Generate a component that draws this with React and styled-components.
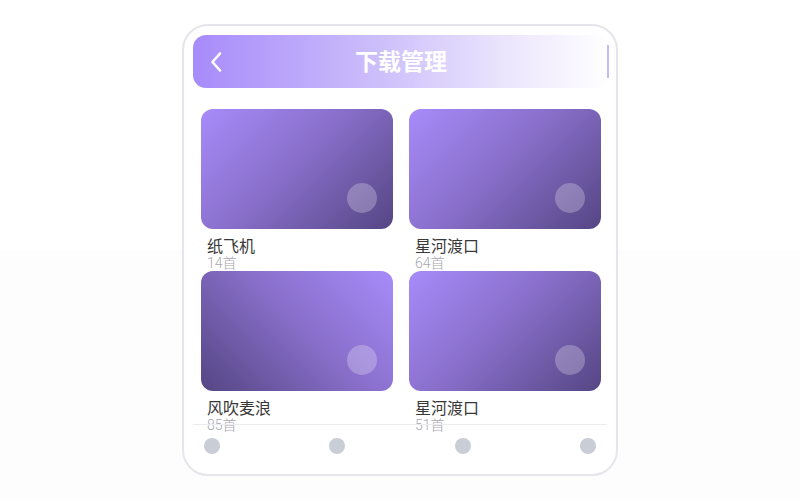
import React from "react";
import styled, { createGlobalStyle } from "styled-components";

const Global = createGlobalStyle`
  html, body { margin: 0; padding: 0; }
  body {
    background: linear-gradient(#ffffff 0 250px, #fdfdfd 250px);
    min-height: 500px;
    font-family: Roboto, "Noto Sans CJK SC", sans-serif;
  }
`;

const Page = styled.div`
  display: flex;
  justify-content: center;
  padding-top: 24px;
`;

const Phone = styled.div`
  box-sizing: border-box;
  width: 436px;
  height: 452px;
  border: 2px solid #e5e5eb;
  border-radius: 26px;
  background: #fff;
  display: flex;
  flex-direction: column;
`;

const Header = styled.div`
  position: relative;
  margin: 9px 7px 0 9px;
  height: 53px;
  border-radius: 13px;
  background: linear-gradient(90deg, #a78bfa 0%, #cdbffb 45%, #ebe5fd 75%, #ffffff 100%);
  display: flex;
  align-items: center;
  justify-content: center;

  &::after {
    content: "";
    position: absolute;
    right: 0;
    top: 10px;
    bottom: 10px;
    width: 2px;
    background: rgba(185, 165, 250, 0.8);
  }
`;

const Back = styled.button`
  position: absolute;
  left: 16px;
  top: 50%;
  transform: translateY(-50%);
  background: none;
  border: 0;
  padding: 0;
  display: flex;
  cursor: pointer;
`;

const Title = styled.h1`
  margin: 0 0 4px;
  color: #fff;
  font-family: "Noto Sans CJK SC", sans-serif;
  font-size: 23px;
  line-height: 30px;
  font-weight: 700;
`;

const Grid = styled.div`
  margin-top: 21px;
  padding: 0 16px 0 17px;
  height: 315px;
  display: grid;
  grid-template-columns: 192px 192px;
  column-gap: 16px;
  row-gap: 1px;
  align-content: start;
`;

const Item = styled.div`
  display: flex;
  flex-direction: column;
`;

const Cover = styled.div`
  position: relative;
  height: 120px;
  border-radius: 12px;
  background: linear-gradient(${(p) => p.$angle}deg, #a78bfa 0%, #8a70cc 45%, #554684 100%);
`;

const Dot = styled.span`
  position: absolute;
  right: 16px;
  bottom: 16px;
  width: 30px;
  height: 30px;
  border-radius: 50%;
  background: rgba(255, 255, 255, 0.25);
`;

const Name = styled.div`
  margin: 9px 0 0 6px;
  font-size: 16px;
  line-height: 18px;
  color: #383838;
`;

const Count = styled.div`
  margin-left: 6px;
  font-size: 14px;
  line-height: 14px;
  font-weight: 300;
  color: #a8a8b0;
`;

const Nav = styled.nav`
  margin: 0 9px;
  padding: 13px 11px 0;
  border-top: 1px solid #ececf0;
  display: flex;
  justify-content: space-between;
`;

const NavDot = styled.span`
  width: 16px;
  height: 16px;
  border-radius: 50%;
  background: #c9cdd5;
`;

const items = [
  { name: "纸飞机", count: "14首", angle: 135 },
  { name: "星河渡口", count: "64首", angle: 135 },
  { name: "风吹麦浪", count: "85首", angle: 225 },
  { name: "星河渡口", count: "51首", angle: 135 },
];

export default function App() {
  return (
    <>
      <Global />
      <Page>
        <Phone>
          <Header>
            <Back aria-label="返回">
              <svg width="14" height="22" viewBox="0 0 14 22" fill="none">
                <path d="M11 2.5 L3.5 11 L11 19.5" stroke="#fff" strokeWidth="2.6" strokeLinecap="round" strokeLinejoin="round" />
              </svg>
            </Back>
            <Title>下载管理</Title>
          </Header>
          <Grid>
            {items.map((it, i) => (
              <Item key={i}>
                <Cover $angle={it.angle}>
                  <Dot />
                </Cover>
                <Name>{it.name}</Name>
                <Count>{it.count}</Count>
              </Item>
            ))}
          </Grid>
          <Nav>
            <NavDot />
            <NavDot />
            <NavDot />
            <NavDot />
          </Nav>
        </Phone>
      </Page>
    </>
  );
}
